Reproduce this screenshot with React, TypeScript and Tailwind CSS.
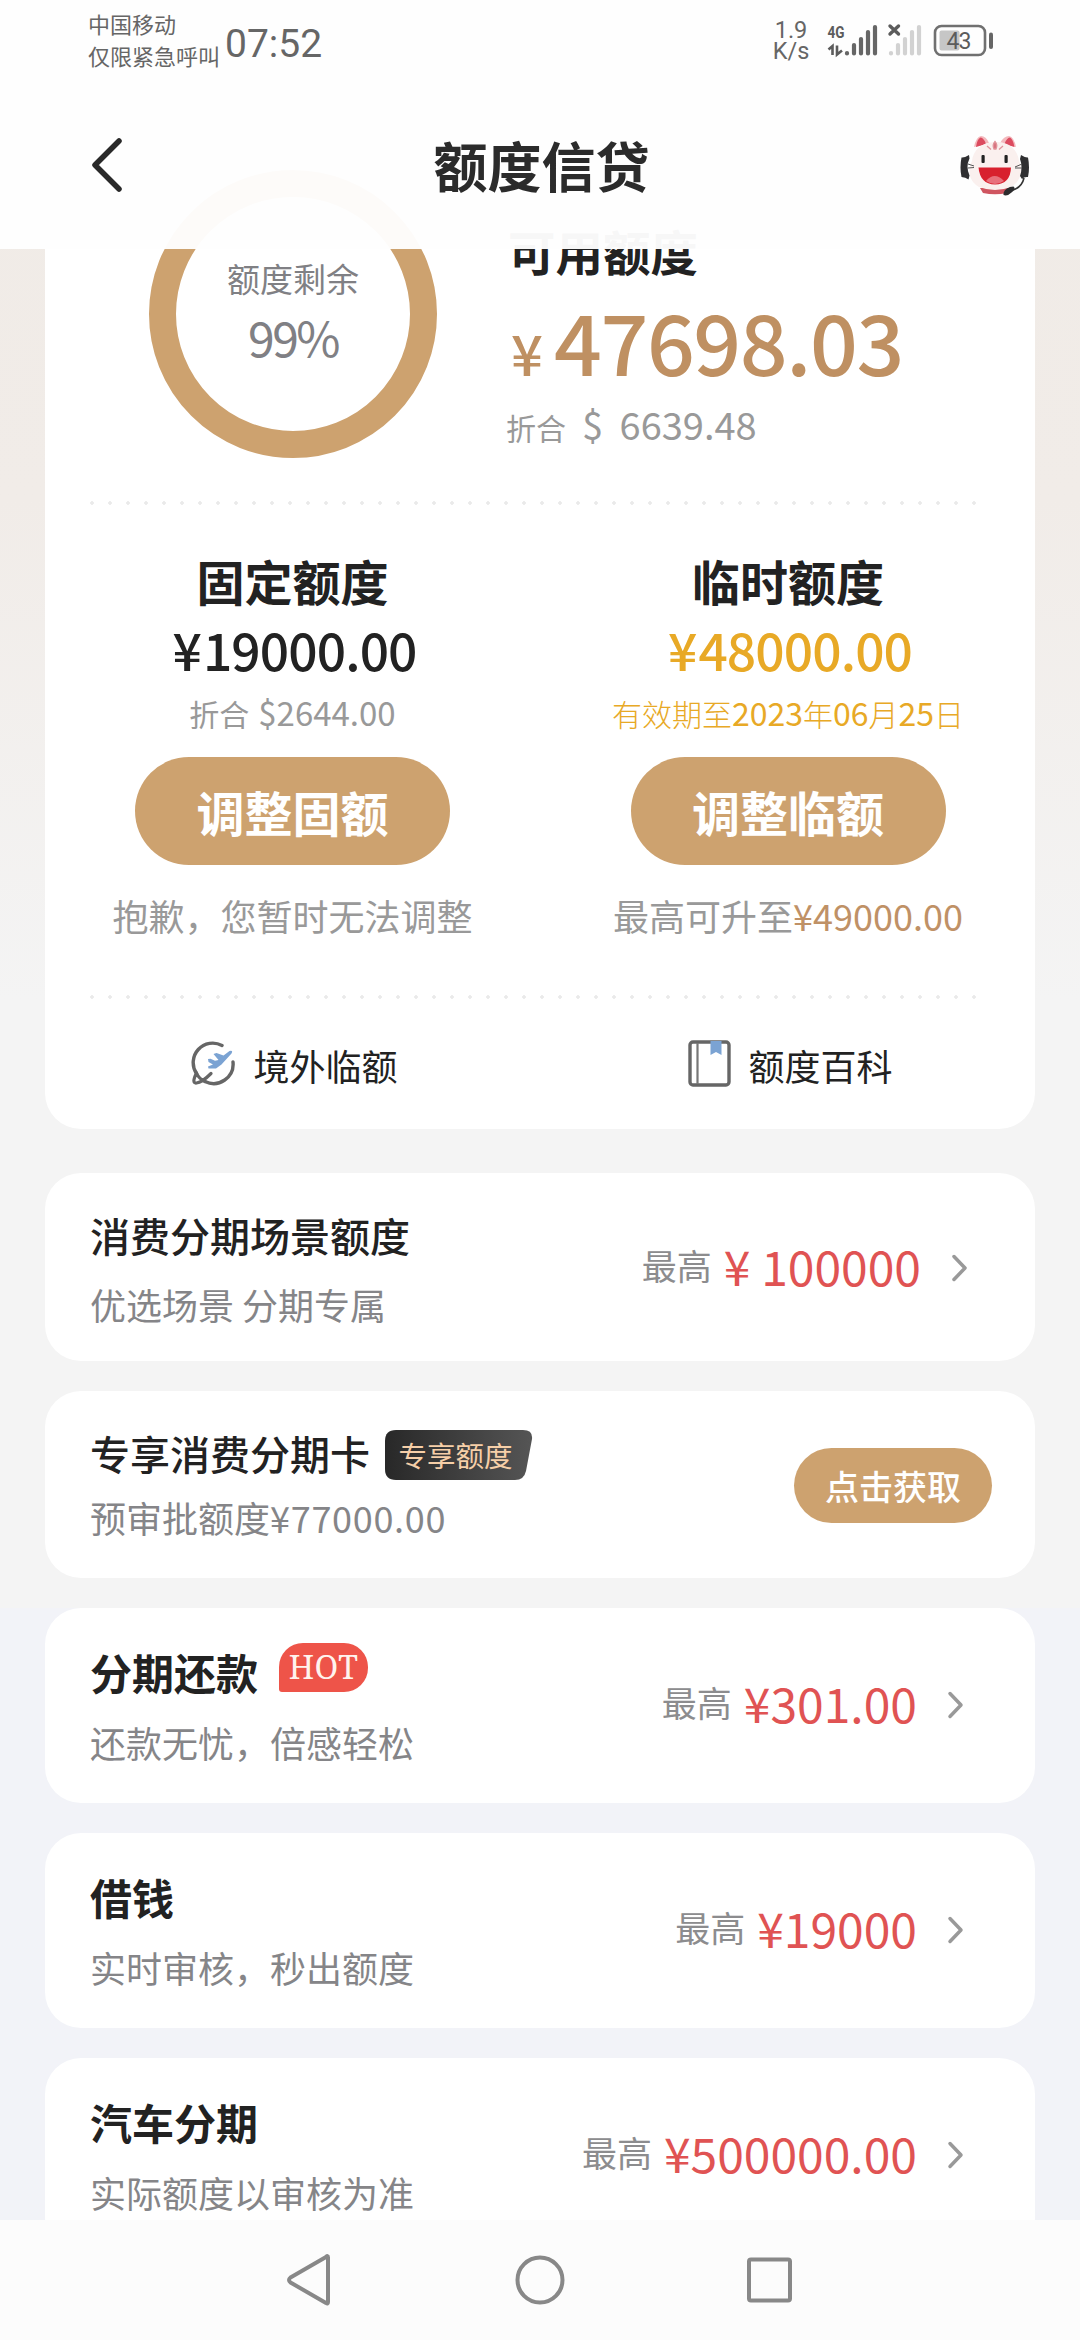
import React from 'react';

function StatusBar() {
  return (
    <div className="flex h-[96px] items-start pl-[88px] text-[#666]">
      <div className="w-[137px] pt-[12px] text-[22px] leading-[32px] whitespace-nowrap">
        <div className="h-[31px] leading-[23px]">中国移动</div>
        <div className="leading-[24px]">仅限紧急呼叫</div>
      </div>
      <div className="mt-[23px] font-[Roboto] text-[39px] leading-[42px] font-[450]">07:52</div>
      <div className="mt-[20px] mr-[1px] ml-auto w-[50px] text-center font-[Roboto] text-[23.5px] leading-[21px] whitespace-pre-line">{'1.9\nK/s'}</div>
      <svg className="mt-[10px] mr-[69px]" width="194" height="60" viewBox="56 0 194 60" fill="none">
        <text x="66.5" y="28" fontSize="17" fontWeight="700" fontFamily="Roboto" fill="#5c5c5c" textLength="17" lengthAdjust="spacingAndGlyphs">4G</text>
        <path d="M67.5 39.5 L71.5 36 V45 M76 35.5 V44.5 L81 40.5" stroke="#5c5c5c" strokeWidth="2.6" />
        <path d="M86 43v.5M93 35v8.5M100 29v14.5M107 22v21.5M114 17v26.5" stroke="#666" strokeWidth="4.2" strokeLinecap="round" />
        <path d="M130 43v.5M137 35v8.5M144 29v14.5M151 22v21.5M158 17v26.5" stroke="#d2d2d2" strokeWidth="4.2" strokeLinecap="round" />
        <path d="M129 16l8.5 8M137.5 16l-8.5 8" stroke="#5c5c5c" strokeWidth="3.4" strokeLinecap="round" />
        <rect x="174" y="16" width="50" height="29" rx="6.5" stroke="#707070" strokeWidth="2.6" />
        <rect x="178.5" y="20.5" width="20" height="20" rx="2" fill="#c6c6c6" />
        <text x="185.5" y="39" fontSize="23" fontFamily="Roboto" fill="#5c5c5c" textLength="25">43</text>
        <path d="M230 24.5v12.5" stroke="#666" strokeWidth="4" strokeLinecap="round" />
      </svg>
    </div>
  );
}

function CatAvatar() {
  return (
    <svg width="70" height="64" viewBox="0 0 70 64">
      <path d="M14 13Q16 3 21 2Q26 2 29 9ZM56 13Q54 3 49 2Q44 2 40 9Z" fill="#f3b9bd" />
      <path d="M16 13Q17 5 20.5 3.5Q24 4 26 10ZM54.5 13Q53 5 50 3.5Q46.5 4 44.5 10Z" fill="#dc4b5f" />
      <path d="M20 54h31l-4 5q-12 2.5-24 0z" fill="#cf5560" />
      <path d="M35 8C50 7 58 17 59 27C64 37 60 48 51 53Q35 59 19 53C9 47 7 37 12 27C13 17 21 8 35 8Z" fill="#faf0ee" />
      <path d="M35 7.5q3 3.5 1 7.5h-2q-2-4 1-7.5zM27 12l4 3.5M43 12l-4 3.5" fill="#d8737f" stroke="#e0949b" strokeWidth="1.3" />
      <rect x="21.5" y="21" width="3.2" height="8" rx="1" fill="#222" />
      <rect x="44.5" y="21" width="3.2" height="8" rx="1" fill="#222" />
      <path d="M18.5 33.5h32.5q-.5 16.5-16 17q-15-.5-16.5-17z" fill="#d8202e" />
      <path d="M26 47q8.5-10 18 0q-9 6-18 0z" fill="#e8707c" />
      <path d="M9 21q-5 3-7.5 2.5q-2 10 0 19.5q4 0 7 2.5l1-4q-4-9 0-17zM61 21q5 3 7 2.5q2 10 0 19.5q-4-.5-6 2l-2-3q3-9 0-17z" fill="#2f2f31" />
      <path d="M8 30l6 2M8 34l6-.5M62 30l-7 3M62 34l-7 0" stroke="#555" strokeWidth="1" />
      <path d="M64 44q-2 9-11 12" stroke="#333" strokeWidth="1.6" fill="none" />
      <path d="M43.5 59q2-6 10-6.5q3 2-2 6q-4 4-8 2.5z" fill="#2b2b2d" />
    </svg>
  );
}

function Header() {
  return (
    <header className="absolute inset-x-0 top-0 z-10 h-[249px] bg-[#fefefe]/[0.97]">
      <StatusBar />
      <div className="flex h-[142px] items-start justify-between pr-[50px] pl-[89px]">
        <svg className="mt-[38px]" width="36" height="62" viewBox="0 0 36 62" fill="none">
          <path d="M30 7 L6 31 L30 55" stroke="#292929" strokeWidth="5.5" strokeLinecap="round" strokeLinejoin="round" />
        </svg>
        <h1 className="mt-[37px] -ml-[2px] text-[54px] leading-[64px] font-bold text-[#2b2b2b]">额度信贷</h1>
        <div className="mt-[38px]"><CatAvatar /></div>
      </div>
    </header>
  );
}

function Dots() {
  return <div className="ml-[45px] h-[4px] w-[898px] bg-[radial-gradient(circle_at_2px_2px,#eaeaea_1.5px,transparent_2px)] bg-[length:18px_4px]" />;
}

function PlaneIcon() {
  return (
    <svg width="46" height="46" viewBox="0 0 46 46" fill="none">
      <path d="M31 4.5A19.5 19.5 0 0 0 5.500 32.5M42 21A19.5 19.5 0 0 1 14 40.5" stroke="#666" strokeWidth="3.4" strokeLinecap="round" />
      <path d="M5.5 32C2 39 2 42.5 5.5 42C10 41.5 16 36.5 20 32.5M5.5 32Q8 38 14 40.5" stroke="#666" strokeWidth="3.2" strokeLinecap="round" />
      <path d="M38.5 10q4-1 2 2.5l-10 11-5.5 4-7.5 0-.5-2 5-2-4.5-2.5-.5-3 2.5-.2 4.500 2 3.500-.8-5-6 3-1 7 2.500z" fill="#7ba3d3" />
    </svg>
  );
}

function BookIcon() {
  return (
    <svg width="44" height="48" viewBox="0 0 44 48" fill="none">
      <rect x="2" y="2" width="39" height="43" rx="3" stroke="#666" strokeWidth="3.4" />
      <path d="M9.5 3v41" stroke="#777" strokeWidth="2.2" />
      <path d="M22.5 1h11v14l-5.5-3-5.5 3z" fill="#7ba3d3" />
    </svg>
  );
}

function QuotaCard() {
  return (
    <section className="h-[1029px] rounded-[36px] bg-white">
      <div className="flex h-[401px]">
        <div className="mt-[70px] ml-[104px] flex h-[288px] w-[288px] flex-col items-center rounded-full border-[27px] border-[#cda26f] text-[#808084]">
          <div className="mt-[61px] text-[33px] leading-[40px]">额度剩余</div>
          <div className="mt-[13px] text-[48px] leading-[50px] tracking-[-2.5px]">99%</div>
        </div>
        <div className="ml-[71px] flex flex-col whitespace-nowrap">
          <h2 className="mt-[127px] text-[47.5px] leading-[48px] font-bold text-[#222]">可用额度</h2>
          <div className="mt-[23px] flex h-[84px] items-baseline font-medium text-[#bf9062]">
            <span className="mr-[11px] ml-[3px] text-[56px] leading-[84px]">¥</span>
            <span className="text-[84px] leading-[84px] tracking-[-1.4px]">47698.03</span>
          </div>
          <div className="mt-[22px] -ml-[2px] flex h-[40px] items-baseline text-[#999]">
            <span className="text-[30px] leading-[40px]">折合</span>
            <span className="ml-[16px] text-[38px] leading-[40px] [word-spacing:8px]">$&nbsp;6639.48</span>
          </div>
        </div>
      </div>
      <Dots />
      <div className="grid h-[490px] grid-cols-2 text-center whitespace-nowrap">
        <div className="flex flex-col items-center">
          <h3 className="mt-[51px] text-[48px] leading-[48px] font-bold text-[#222]">固定额度</h3>
          <div className="mt-[19px] flex pl-[4px] text-[51.5px] leading-[52px] font-medium tracking-[-0.9px] text-[#222]"><span className="mr-[2px]">¥</span>19000.00</div>
          <div className="mt-[17px] flex h-[40px] items-baseline text-[#999]">
            <span className="text-[30px] leading-[40px]">折合</span>
            <span className="ml-[9px] text-[33px] leading-[40px]">$2644.00</span>
          </div>
          <button className="mt-[25px] h-[108px] w-[315px] rounded-full bg-[#cda26f] text-[48px] leading-[106px] font-bold text-white">调整固额</button>
          <div className="mt-[30px] text-[36px] leading-[40px] text-[#999]">抱歉，您暂时无法调整</div>
        </div>
        <div className="flex flex-col items-center pl-[1px]">
          <h3 className="mt-[51px] text-[48px] leading-[48px] font-bold text-[#222]">临时额度</h3>
          <div className="mt-[19px] flex pl-[4px] text-[51.5px] leading-[52px] font-medium tracking-[-0.9px] text-[#e8a926]"><span className="mr-[2px]">¥</span>48000.00</div>
          <div className="mt-[17px] flex h-[40px] items-baseline text-[30px] leading-[40px] font-light text-[#e8a926]">
            有效期至<span className="text-[32px] font-normal">2023</span>年<span className="text-[32px] font-normal">06</span>月<span className="text-[32px] font-normal">25</span>日
          </div>
          <button className="mt-[25px] h-[108px] w-[315px] rounded-full bg-[#cda26f] text-[48px] leading-[106px] font-bold text-white">调整临额</button>
          <div className="mt-[30px] text-[36px] leading-[40px] text-[#999]">最高可升至<span className="text-[#bf9166]">¥49000.00</span></div>
        </div>
      </div>
      <Dots />
      <div className="grid grid-cols-2 text-[36px] leading-[40px] text-[#222]">
        <div className="mt-[41px] flex h-[48px] items-center justify-center gap-[16px] pl-[4px]"><PlaneIcon /><span className="mt-[1px]">境外临额</span></div>
        <div className="mt-[41px] flex h-[48px] items-center justify-center gap-[16px] pl-[6px]"><BookIcon /><span className="mt-[1px]">额度百科</span></div>
      </div>
    </section>
  );
}

function Max({ amount, className }: { amount: string; className: string }) {
  return (
    <div className={'flex items-center whitespace-nowrap ' + className}>
      <span className="text-[35px] leading-[48px] text-[#8c8c8e]">最高</span>
      <span className="ml-[12px] text-[48px] leading-[48px] text-[#e05353]">{amount}</span>
      <svg className="mt-[6px] ml-[29px]" width="18" height="30" viewBox="0 0 18 30" fill="none">
        <path d="M4 3.5 L15 15 L4 26.5" stroke="#999" strokeWidth="3.5" strokeLinecap="round" strokeLinejoin="round" />
      </svg>
    </div>
  );
}

function LoanCard({ title, sub, amount, hot }: { title: string; sub: string; amount: string; hot?: boolean }) {
  return (
    <section className="mt-[30px] flex h-[195px] justify-between rounded-[36px] bg-white pr-[71px] pl-[45px]">
      <div className="pt-[42px]">
        <div className="flex h-[44px]">
          <h3 className="text-[42px] leading-[44px] font-bold text-[#222]">{title}</h3>
          {hot && (
            <span className="-mt-[7px] ml-[21px] h-[49px] w-[89px] rounded-t-[24px] rounded-br-[24px] rounded-bl-[3px] bg-[#ee5449] text-center font-['Noto_Serif','Liberation_Serif',serif] text-[32px] leading-[47px] tracking-[0.5px] text-[#fff3ee]">HOT</span>
          )}
        </div>
        <p className="mt-[28px] text-[36px] leading-[40px] text-[#858588]">{sub}</p>
      </div>
      <Max amount={amount} className="-mt-[8px]" />
    </section>
  );
}

export default function App() {
  return (
    <div className="relative flex h-[2340px] w-[1080px] flex-col overflow-hidden bg-[linear-gradient(180deg,#f0ebe6_0px,#f1ece8_500px,#f4f4f4_1000px,#f4f4f4_1608px,#f2f3f8_1608px)] font-['Noto_Sans_CJK_SC',sans-serif]">
      <Header />
      <main className="h-[2220px] overflow-hidden px-[45px] pt-[100px]">
        <QuotaCard />
        <section className="mt-[44px] flex h-[188px] justify-between rounded-[36px] bg-white pr-[67px] pl-[45px]">
          <div className="pt-[42px]">
            <h3 className="text-[40px] leading-[40px] font-medium text-[#222]">消费分期场景额度</h3>
            <p className="mt-[29px] text-[36px] leading-[40px] text-[#858588]">优选场景 分期专属</p>
          </div>
          <Max amount="¥ 100000" className="-mt-[4px]" />
        </section>
        <section className="mt-[30px] flex h-[187px] items-start justify-between rounded-[36px] bg-white pr-[43px] pl-[45px]">
          <div className="pt-[42px]">
            <div className="flex h-[40px]">
              <h3 className="text-[40px] leading-[40px] font-medium text-[#222]">专享消费分期卡</h3>
              <span className="relative -mt-[3px] ml-[14px] h-[50px] w-[149px] text-center text-[28.5px] leading-[49px] text-[#f6cfa8]">
                <svg className="absolute inset-0" width="149" height="50" viewBox="0 0 149 50">
                  <defs>
                    <linearGradient id="badge" x1="0" y1="0" x2="1" y2="0">
                      <stop offset="0" stopColor="#282828" />
                      <stop offset="1" stopColor="#555" />
                    </linearGradient>
                  </defs>
                  <path d="M12 0H139Q149 0 148 9L142 41Q140 50 131 50H12Q1 50 1 39V11Q1 0 12 0Z" fill="url(#badge)" />
                </svg>
                <span className="relative -ml-[6px]">专享额度</span>
              </span>
            </div>
            <p className="mt-[24px] text-[36px] leading-[40px] text-[#858588]">预审批额度<span className="tracking-[0.7px]">¥77000.00</span></p>
          </div>
          <button className="mt-[57px] h-[75px] w-[198px] rounded-full bg-[#cda26f] text-[34px] leading-[72px] font-medium text-white">点击获取</button>
        </section>
        <LoanCard title="分期还款" sub="还款无忧，倍感轻松" amount="¥301.00" hot />
        <LoanCard title="借钱" sub="实时审核，秒出额度" amount="¥19000" />
        <LoanCard title="汽车分期" sub="实际额度以审核为准" amount="¥500000.00" />
      </main>
      <nav className="relative flex h-[120px] items-center justify-center bg-[#fcfcfc]">
        <svg width="520" height="60" viewBox="0 0 520 60" fill="none" stroke="#888" strokeWidth="4" strokeLinejoin="round">
          <path d="M48 7.5Q48 5 46 7L10.5 27.5Q7.5 30 10.5 32.5L46 53Q48 54.5 48 52Z" />
          <circle cx="260" cy="30" r="22.5" />
          <rect x="469" y="9.5" width="41" height="41" rx="2" />
        </svg>
      </nav>
    </div>
  );
}
